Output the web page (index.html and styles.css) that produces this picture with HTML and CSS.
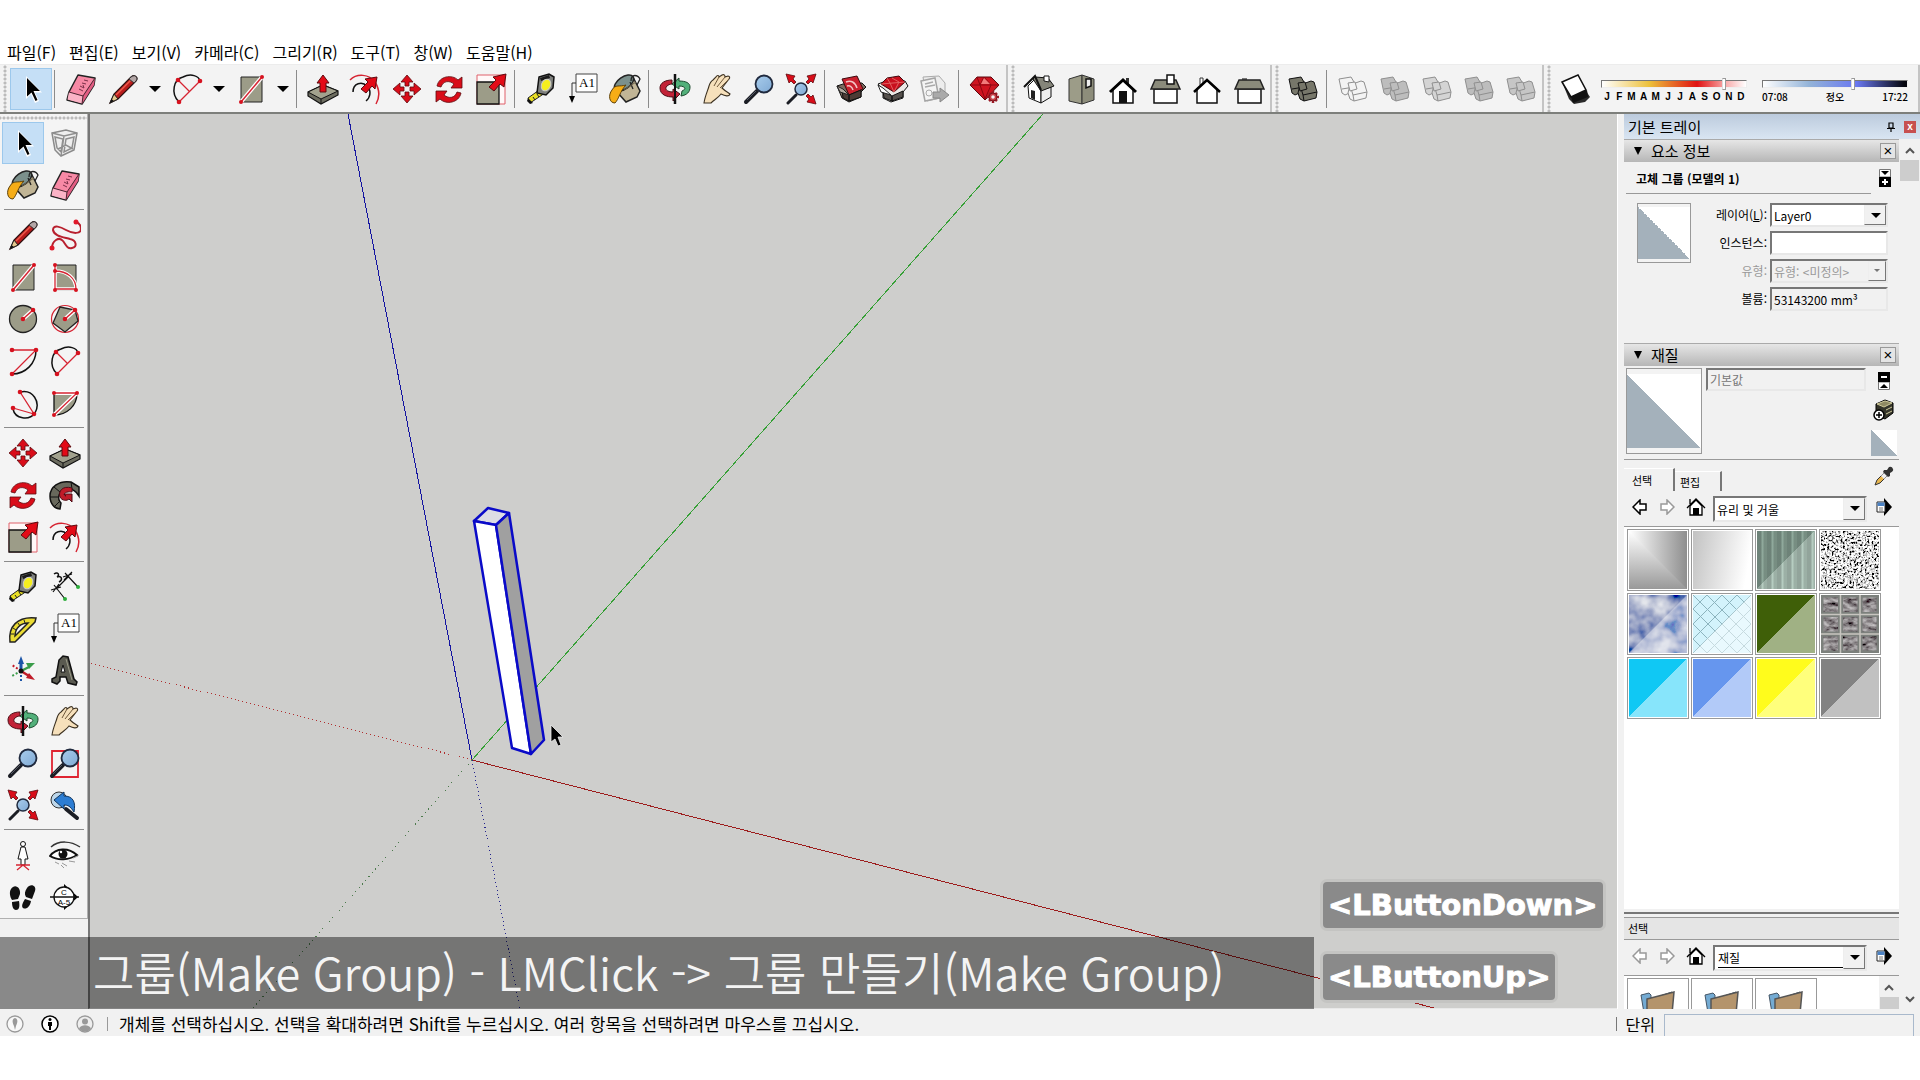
FILE: index.html
```
<!DOCTYPE html>
<html lang="ko">

<head>
    <meta charset="UTF-8">
    <meta name="viewport" content="width=device-width, initial-scale=1.0">
    <title>SketchUp</title>
    <link rel="stylesheet" href="styles.css">
</head>

<body>

    <!-- icons -->
    <svg class="defs" aria-hidden="true">
        <defs>
            <linearGradient id="lens" x1="0" y1="0" x2="1" y2="1">
                <stop offset="0" stop-color="#a9cdec" />
                <stop offset="1" stop-color="#7fa9d4" />
            </linearGradient>
            <linearGradient id="fade-x">
                <stop offset="0" stop-color="#fff" />
                <stop offset="1" stop-color="#8e8e8e" />
            </linearGradient>
            <linearGradient id="fade-y" x1="0" y1="0" x2="0" y2="1">
                <stop offset="0" stop-color="#fff" />
                <stop offset="1" stop-color="#999" />
            </linearGradient>
            <filter id="speckle" x="0" y="0" width="100%" height="100%">
                <feTurbulence type="fractalNoise" baseFrequency="0.45" numOctaves="2" seed="4" />
                <feColorMatrix values="4 0 0 0 -1.3  4 0 0 0 -1.3  4 0 0 0 -1.3  0 0 0 0 1" />
            </filter>
            <filter id="clouds" x="0" y="0" width="100%" height="100%">
                <feTurbulence type="fractalNoise" baseFrequency="0.05" numOctaves="3" seed="8" />
                <feColorMatrix values="1.5 0 0 0 -0.45  1.4 0 0 0 -0.35  0.9 0 0 0 0.1  0 0 0 0 1" />
            </filter>
            <filter id="stone" x="0" y="0" width="100%" height="100%">
                <feTurbulence type="fractalNoise" baseFrequency="0.12 0.25" numOctaves="3" seed="2" />
                <feColorMatrix values="0.9 0 0 0 -0.18  0.9 0 0 0 -0.2  0.9 0 0 0 -0.19  0 0 0 0 1" />
            </filter>
        </defs>

        <symbol id="i-arrow" viewBox="0 0 32 32">
            <path d="M11 3V26L16 21L20 30L24 28L20 19.500H27Z" fill="#fff" />
            <path d="M12 5V23.500L16.500 19.500L20.500 28L22.500 27L18.500 18H25Z" fill="#000" />
        </symbol>
        <symbol id="i-eraser" viewBox="0 0 32 32">
            <path d="M13 2L30 5L29 12L17 31L2 27L4 19Z" fill="#f789a5" stroke="#222" stroke-width="1.500" stroke-linejoin="round" />
            <path d="M4 19L18 23L17 30.500L2.500 26.500Z" fill="#fbb3c6" />
            <path d="M18 23L30 5L29 12L17 31Z" fill="#e25d83" />
            <path d="M4 19L18 23L30 5M18 23L17 31" fill="none" stroke="#4a2430" />
            <path d="M14 16l4 2M15 13l4 2-1-3M17 10l4 1M19 7l4 1" stroke="#7c3049" fill="none" />
        </symbol>
        <symbol id="i-pencil" viewBox="0 0 32 32">
            <path d="M3 30L7 21L24 4Q28 1 30 5Q30 7 29 8L11 26Z" fill="#b91c1c" stroke="#2d1010" stroke-width="1.200" />
            <path d="M3 30L7 21L11 26Z" fill="#e5c98e" stroke="#222" />
            <path d="M3 30L4.500 26L7 28Z" fill="#111" />
            <path d="M9 22L25 6" stroke="#ee5a4b" stroke-width="1.500" />
            <path d="M22 6L24 4Q28 1 30 5Q30 7 29 8L27 10Z" fill="#b3a6a6" stroke="#333" />
        </symbol>
        <symbol id="i-arc" viewBox="0 0 32 32">
            <path d="M8 29C-1 20 3 6 12 4C20 0 28 3 29 8" fill="none" stroke="#111" stroke-width="1.500" />
            <path d="M8 29L29 8M7 7L18 18" stroke="#d62432" stroke-width="1.300" />
            <g fill="#d6121f"><circle cx="7" cy="7" r="2.300" /><circle cx="29" cy="8" r="2.300" /><circle cx="8" cy="29" r="2.300" /></g>
        </symbol>
        <symbol id="i-rect" viewBox="0 0 32 32">
            <path d="M6 4H27V29H6Z" fill="#9c9c88" stroke="#222" />
            <path d="M6 29L27 4" stroke="#fff" stroke-width="4" /><path d="M6 29L27 4" stroke="#d62432" stroke-width="1.500" />
            <circle cx="6" cy="29" r="2" fill="#d6121f" /><circle cx="27" cy="4" r="2" fill="#d6121f" />
        </symbol>
        <symbol id="i-push" viewBox="0 0 32 32">
            <path d="M1 19L16 12L31 18V22L14 31L1 23Z" fill="#6d6d60" stroke="#111" stroke-width="1.200" />
            <path d="M1 19L16 12L31 18L14 26Z" fill="#a2a28e" stroke="#111" /><path d="M14 26V31" stroke="#111" />
            <path d="M13 19V10H10L16 2L22 10H19V19Z" fill="#e30b17" stroke="#5d0a0e" />
        </symbol>
        <symbol id="i-offset" viewBox="0 0 32 32">
            <path d="M1 7C8 0 20 1 26 9C31 17 31 24 27 31" fill="none" stroke="#d62432" stroke-width="1.500" />
            <path d="M4 19C4 10 13 8 18 13C23 18 21 25 17 28" fill="none" stroke="#111" stroke-width="1.500" />
            <path d="M12 16L19 9L16 6L28 4L26 16L23 13L17 20Z" fill="#e30b17" stroke="#5d0a0e" />
        </symbol>
        <symbol id="i-move" viewBox="0 0 32 32">
            <path id="mv" d="M16 2L22 9H18V13H14V9H10Z" fill="#d90d19" stroke="#5d0a0e" stroke-width=".8" />
            <use href="#mv" transform="rotate(90 16 16)" /><use href="#mv" transform="rotate(180 16 16)" /><use href="#mv" transform="rotate(270 16 16)" />
        </symbol>
        <symbol id="i-rotate" viewBox="0 0 32 32">
            <path id="rt" d="M4 13C6 3 19 1 25 7L29 4V15H18L21 11C16 7 10 8 8 14Z" fill="#d90d19" stroke="#5d0a0e" stroke-width=".8" />
            <use href="#rt" transform="rotate(180 16 16.500)" />
        </symbol>
        <symbol id="i-scale" viewBox="0 0 32 32">
            <path d="M2 2H30V31H2Z" fill="#fff8f8" stroke="#e0606a" /><path d="M2 9H24V31H2Z" fill="#9c9c88" stroke="#111" stroke-width="1.300" />
            <path d="M14 14L21 7L18 4L31 1L29 14L25 11L19 18Z" fill="#e30b17" stroke="#5d0a0e" />
        </symbol>
        <symbol id="i-tape" viewBox="0 0 32 32">
            <path d="M3 25L17 15L20 20L5 30Z" fill="#e9df25" stroke="#222" /><path d="M3 25L8 30L5 31L2 28Z" fill="#111" />
            <path d="M14 4L24 1L29 4L28 15L21 22L12 20Z" fill="#7d7f7c" stroke="#111" stroke-width="1.500" />
            <path d="M15 5L24 2L25 5L16 8Z" fill="#1b1b1b" /><ellipse cx="21" cy="12" rx="4.500" ry="6" fill="#f5ee1f" stroke="#ccc" transform="rotate(25 21 12)" />
            <path d="M8 24l2 3M12 21l2 3" stroke="#222" />
        </symbol>
        <symbol id="i-paint" viewBox="0 0 32 32">
            <path d="M12 12L24 4L31 18L28 24L17 29L9 20Z" fill="#c1b596" stroke="#222" stroke-width="1.500" />
            <ellipse cx="15" cy="10" rx="11" ry="6" fill="#7b908c" stroke="#222" stroke-width="1.500" transform="rotate(-35 15 10)" />
            <path d="M22 8C22 0 29 2 31 6L28 12M21 9L24 16" fill="none" stroke="#222" stroke-width="1.300" />
            <path d="M15 17L27 9" stroke="#6d634b" />
            <path d="M3 17C6 11 11 14 17 12C11 18 10 26 6 30C0 30 -1 22 3 17Z" fill="#f6ad17" stroke="#5e420b" />
        </symbol>
        <symbol id="i-orbit" viewBox="0 0 32 32">
            <path d="M20 8V5L13 11L20 16V13C26 13 28 16 23 18L22 23C28 22 31 19 31 14C31 10 27 8 20 8Z" fill="#52b07a" stroke="#1c4a2e" />
            <path d="M13 7C6 7 1 10 1 15C1 22 8 24 14 24V28L21 21L14 16V19C8 19 5 16 8 13C9 12 11 11 13 11Z" fill="#c22237" stroke="#4e0d16" />
            <path d="M16 1V9M16 23V31" stroke="#111" stroke-width="2.500" /><path d="M16 9V23" stroke="#111" stroke-width="2" />
        </symbol>
        <symbol id="i-hand" viewBox="0 0 32 32">
            <path d="M3 30C4 23 7 17 8 13C9 10 10 8 12 7L15 4C16 2 18 2 18 4L21 2C23 1 24 2 24 4L27 3C29 3 29 5 28 6L21 15C24 18 28 20 29 21C28 24 24 23 20 21C17 25 13 27 10 30Z" fill="#f6e0bb" stroke="#3b3020" stroke-width="1.100" />
            <path d="M13 13L18 4M16 14L24 4M19 15L28 6" stroke="#6d573a" fill="none" />
        </symbol>
        <symbol id="i-zoom" viewBox="0 0 32 32">
            <path d="M3 29L14 18" stroke="#1b1d24" stroke-width="4" stroke-linecap="round" /><path d="M4 27L13 18" stroke="#555a66" />
            <circle cx="21" cy="11" r="8.500" fill="url(#lens)" stroke="#202a3e" stroke-width="1.800" />
        </symbol>
        <symbol id="i-extents" viewBox="0 0 32 32">
            <path d="M3 30L11 22" stroke="#1b1d24" stroke-width="3" stroke-linecap="round" />
            <circle cx="16" cy="16" r="6" fill="url(#lens)" stroke="#202a3e" stroke-width="1.500" />
            <g fill="#d90d19" stroke="#5d0a0e" stroke-width=".8"><path id="ex" d="M1 1L10 3L8 6L11 9L9 11L6 8L4 10Z" /><use href="#ex" transform="matrix(-1 0 0 1 32 0)" /><use href="#ex" transform="rotate(180 16 16)" /></g>
        </symbol>
        <symbol id="i-box" viewBox="0 0 32 32">
            <path d="M2 13L8 11L27 10L31 14L26 19V24L14 29L7 25Z" fill="#7d6a5e" stroke="#111" />
            <path d="M7 6L22 3L28 16L14 22Z" fill="#c9202d" stroke="#3e0a0e" /><path d="M11 9C16 7 20 9 22 15M12 13C15 12 17 14 18 17" fill="none" stroke="#f3c4c4" stroke-width="1.500" />
            <path d="M7 16L14 22V28L8 25ZM14 22L26 17V24L14 28Z" fill="#4c3b35" stroke="#111" /><path d="M2 13L8 16L14 22L5 19Z" fill="#b1a79e" stroke="#222" />
        </symbol>
        <symbol id="i-gembox" viewBox="0 0 32 32">
            <path d="M1 11L9 8L28 8L31 13L26 19V25L14 29L6 25V18Z" fill="#ece9e6" stroke="#111" />
            <path d="M10 5L22 3L28 9L17 19L4 11Z" fill="#c9101d" stroke="#3e0a0e" /><path d="M4 11L28 9M10 5L13 10L17 19L22 9L15 5" fill="none" stroke="#e06060" />
            <path d="M6 18L15 23V28L7 25ZM15 23L26 18V24L15 28Z" fill="#55504c" stroke="#111" /><path d="M1 12L6 15L14 22L4 19Z" fill="#fff" stroke="#222" />
        </symbol>
        <symbol id="i-send" viewBox="0 0 32 32">
            <path d="M4 4L20 3L26 10V24L8 28Z" fill="#ededed" stroke="#aaa" /><path d="M2 8L16 5L20 25L6 28Z" fill="#f4f4f4" stroke="#a5a5a5" stroke-width="1.500" />
            <path d="M6 11L14 9M6 14L16 12" stroke="#aaa" stroke-width="1.500" /><circle cx="10" cy="20" r="3" fill="none" stroke="#aaa" />
            <path d="M14 19H21V15L30 22L21 29V25H14Z" fill="#a9a9a9" stroke="#888" />
        </symbol>
        <symbol id="i-gem" viewBox="0 0 32 32">
            <path d="M8 4H22L30 12L16 27L1 12Z" fill="#cf1420" stroke="#5c070d" /><path d="M1 12H30M8 4L11 12L16 26L22 12L15 4L11 12" fill="none" stroke="#8d0710" /><path d="M15 5L21 11H12Z" fill="#f17a7a" />
            <path d="M24 18v12M18 24h12M20 20l8 8M28 20l-8 8" stroke="#9c1b26" stroke-width="2.500" /><circle cx="24" cy="24" r="4" fill="#c63e47" stroke="#7e121b" /><circle cx="24" cy="24" r="1.800" fill="#f2f2f2" />
        </symbol>
        <symbol id="i-iso" viewBox="0 0 32 32">
            <path d="M5 13L12 6L18 16V30L6 25Z" fill="#fff" stroke="#111" /><path d="M18 17L28 14V24L18 30Z" fill="#eee" stroke="#111" />
            <path d="M12 4L25 5L31 13L18 18L10 6Z" fill="#85857a" stroke="#111" /><path d="M1 14L12 3L18 17" fill="none" stroke="#111" stroke-width="2" /><path d="M21 3H26V9L21 8Z" fill="#fff" stroke="#111" /><path d="M8 17L12 18V27L8 25Z" fill="#222" />
        </symbol>
        <symbol id="i-top" viewBox="0 0 32 32">
            <path d="M4 6L17 2V31L4 28Z" fill="#9c9c88" stroke="#333" /><path d="M17 2L29 6V27L17 31Z" fill="#8d8d7b" stroke="#333" /><path d="M21 6H26V13L21 15Z" fill="#eee" stroke="#111" stroke-width="1.500" />
        </symbol>
        <symbol id="i-front" viewBox="0 0 32 32">
            <path d="M19 5H22V11H19Z" fill="#333" /><path d="M6 16L16 7L26 16V30H6Z" fill="#fff" stroke="#111" stroke-width="1.500" /><path d="M3 19L16 7L29 19" fill="none" stroke="#000" stroke-width="3" /><path d="M12 18H20V30H12Z" fill="#111" />
        </symbol>
        <symbol id="i-right" viewBox="0 0 32 32">
            <path d="M5 16H28V30H5Z" fill="#fff" stroke="#111" stroke-width="1.500" /><path d="M6 7H27L31 16H2Z" fill="#8b8b7b" stroke="#222" stroke-width="1.500" /><path d="M18 2H25V11H18Z" fill="#fff" stroke="#111" stroke-width="1.500" />
        </symbol>
        <symbol id="i-back" viewBox="0 0 32 32">
            <path d="M9 5H12V12H9Z" fill="#fff" stroke="#333" /><path d="M6 16L16 7L26 16V30H6Z" fill="#fff" stroke="#111" stroke-width="1.500" /><path d="M3 19L16 7L29 19" fill="none" stroke="#000" stroke-width="2.500" />
        </symbol>
        <symbol id="i-left" viewBox="0 0 32 32">
            <path d="M5 16H28V30H5Z" fill="#fff" stroke="#111" stroke-width="1.500" /><path d="M9 5H14V8H9Z" fill="#777" /><path d="M6 7H27L31 16H2Z" fill="#8b8b7b" stroke="#222" stroke-width="1.500" />
        </symbol>
        <symbol id="i-solid" viewBox="0 0 32 32">
            <path d="M2 6L14 4L17 9L19 17L8 22L5 20Z" /><path d="M5 16L17 14" />
            <path d="M13 12L24 8L27 9L30 19L29 25L17 28L13 26L11 20Z" /><path d="M13 12L16 22L30 19M16 22L17 28" />
            <path d="M11 10L18 9L20 16L13 18Z" />
        </symbol>
        <symbol id="i-shadow" viewBox="0 0 32 32">
            <path d="M3 9L19 3L29 21L31 24L26 29L15 31L10 26Z" fill="#2a2a2a" /><path d="M3 9L19 2L27 17L12 24Z" fill="#fff" stroke="#111" stroke-width="1.500" /><path d="M12 24L28 17L29 24L14 30Z" fill="#111" />
        </symbol>
        <symbol id="i-component" viewBox="0 0 32 32">
            <path d="M3 6L17 3L28 6L25 23L12 29L6 23Z" fill="#eee" stroke="#8a8a8a" stroke-width="1.500" /><path d="M3 6L15 9L28 6M15 9L12 29M6 10L14 12L12 25L8 21ZM17 12L25 10L23 21L15 25ZM9 22L17 18L24 22" fill="none" stroke="#8f8f8f" stroke-width="1.500" />
        </symbol>
        <symbol id="i-free" viewBox="0 0 32 32">
            <path d="M3 29C3 22 10 17 14 22C17 26 18 30 23 29C29 28 27 21 21 20C14 18 5 17 4 11C4 5 12 8 17 11C24 15 32 15 32 10C32 6 30 4 27 3" fill="none" stroke="#b8202e" stroke-width="2" /><circle cx="3" cy="29" r="2.500" fill="#e0192a" /><circle cx="27" cy="3" r="2.500" fill="#e0192a" />
        </symbol>
        <symbol id="i-rotrect" viewBox="0 0 32 32">
            <path d="M6 4H27V29H6Z" fill="#9c9c88" stroke="#222" /><path d="M6 10C18 10 27 17 27 28H6V4" fill="none" stroke="#fff" stroke-width="3.500" /><path d="M6 10C18 10 27 17 27 28H6V4" fill="none" stroke="#d62432" stroke-width="1.300" />
            <g fill="#d6121f"><circle cx="6" cy="4" r="2" /><circle cx="6" cy="10" r="2" /><circle cx="6" cy="29" r="2" /><circle cx="27" cy="29" r="2" /></g>
        </symbol>
        <symbol id="i-circle" viewBox="0 0 32 32">
            <circle cx="16" cy="16" r="13.500" fill="#9c9c88" stroke="#222" stroke-width="1.300" /><path d="M16 16L26 7" stroke="#fff" stroke-width="4" /><path d="M16 16L26 7" stroke="#d62432" stroke-width="1.500" /><circle cx="16" cy="16" r="2.300" fill="#d6121f" /><circle cx="26" cy="7" r="2.300" fill="#d6121f" />
        </symbol>
        <symbol id="i-polygon" viewBox="0 0 32 32">
            <circle cx="16" cy="16" r="13.500" fill="none" stroke="#d62432" stroke-width="1.200" /><path d="M11 4L26 7L29 18L16 29L4 20Z" fill="#9c9c88" stroke="#222" stroke-width="1.300" /><path d="M16 16L26 7" stroke="#fff" stroke-width="4" /><path d="M16 16L26 7" stroke="#d62432" stroke-width="1.500" /><circle cx="16" cy="16" r="2.300" fill="#d6121f" /><circle cx="26" cy="7" r="2.300" fill="#d6121f" />
        </symbol>
        <symbol id="i-arc2" viewBox="0 0 32 32">
            <path d="M29 5C29 18 19 29 5 29" fill="none" stroke="#111" stroke-width="1.500" /><path d="M5 5H29L5 29" fill="none" stroke="#d62432" stroke-width="1.300" /><g fill="#d6121f"><circle cx="5" cy="5" r="2.300" /><circle cx="29" cy="5" r="2.300" /><circle cx="5" cy="29" r="2.300" /></g>
        </symbol>
        <symbol id="i-arc3" viewBox="0 0 32 32">
            <path d="M13 5C26 2 34 15 28 26C22 34 8 32 6 22" fill="none" stroke="#111" stroke-width="1.500" /><path d="M13 5L27 27L6 21" fill="none" stroke="#d62432" stroke-width="1.300" /><g fill="#d6121f"><circle cx="13" cy="5" r="2.300" /><circle cx="27" cy="27" r="2.300" /><circle cx="6" cy="21" r="2.300" /></g>
        </symbol>
        <symbol id="i-pie" viewBox="0 0 32 32">
            <path d="M5 6H28C28 19 18 28 5 28Z" fill="#9c9c88" stroke="#111" stroke-width="1.300" /><path d="M5 28L28 6H5" fill="none" stroke="#fff" stroke-width="4" /><path d="M5 28L28 6H5" fill="none" stroke="#d62432" stroke-width="1.300" /><g fill="#d6121f"><circle cx="5" cy="6" r="2" /><circle cx="28" cy="6" r="2" /><circle cx="5" cy="28" r="2" /></g>
        </symbol>
        <symbol id="i-follow" viewBox="0 0 32 32">
            <path d="M30 8L22 3C10 1 1 8 1 17C1 25 6 30 11 30L12 24C8 20 9 12 17 10C23 9 27 12 30 17Z" fill="#68685c" stroke="#111" stroke-width="1.500" /><path d="M22 3L23 10M5 8L11 13M1 18L9 18M6 27L10 23" stroke="#111" />
            <path d="M23 9C13 6 9 13 11 18C13 22 18 22 20 20L23 23L23 15L15 15L17 17C14 17 14 12 23 13Z" fill="#c01c29" stroke="#4e0d16" />
        </symbol>
        <symbol id="i-dim" viewBox="0 0 32 32">
            <path d="M7 18L20 5M5 14L16 28M16 2L29 16M2 19L12 16M4 21L10 13M14 6L23 3M15 9L23 1" stroke="#111" stroke-width="1.200" /><path d="M5 3C9 0 11 4 8 6C13 4 14 9 10 11" fill="none" stroke="#111" stroke-width="1.500" /><circle cx="16" cy="28" r="2" fill="#2eae3c" /><circle cx="29" cy="16" r="2" fill="#2eae3c" />
        </symbol>
        <symbol id="i-protractor" viewBox="0 0 32 32">
            <path d="M3 29C1 14 10 3 29 5L28 9L8 29ZM8 23C8 15 14 10 21 10Z" fill="#eadb33" fill-rule="evenodd" stroke="#222" stroke-width="1.500" /><path d="M4 21l3 0M6 15l3 2M11 10l2 3M17 7l1 3" stroke="#222" />
        </symbol>
        <symbol id="i-axes" viewBox="0 0 32 32">
            <path d="M14 16V9" stroke="#1c55a8" stroke-width="3" /><path d="M11 9L14 1L17 9Z" fill="#1c55a8" /><path d="M14 16L22 12" stroke="#3a9c4a" stroke-width="2.500" /><path d="M19 8L28 8L22 14Z" fill="#3a9c4a" /><path d="M14 16L22 21" stroke="#c01c29" stroke-width="2.500" /><path d="M19 23L22 18L28 25Z" fill="#c01c29" />
            <path d="M14 16V28" stroke="#1c55a8" stroke-width="2" stroke-dasharray="2 2" /><path d="M14 16L5 21" stroke="#3a9c4a" stroke-width="2" stroke-dasharray="2 2" /><path d="M14 16L5 10" stroke="#c01c29" stroke-width="2" stroke-dasharray="2 2" /><circle cx="14" cy="16" r="2.500" fill="#111" />
        </symbol>
        <symbol id="i-3dtext" viewBox="0 0 32 32">
            <path d="M3 24L7 22L10 5L14 1L19 2L25 24L28 27L27 30L19 28L17 22H11L11 26L8 29L3 27Z" fill="#5a5a50" stroke="#111" stroke-width="1.500" /><path d="M12 17L14 10L16 17Z" fill="#f3f3f3" stroke="#111" /><path d="M17 4L23 25" stroke="#9a9a88" />
        </symbol>
        <symbol id="i-window" viewBox="0 0 32 32">
            <path d="M3 4H29V30H3Z" fill="none" stroke="#df2431" stroke-width="1.800" /><use href="#i-zoom" width="32" height="32" />
        </symbol>
        <symbol id="i-prev" viewBox="0 0 32 32">
            <circle cx="10" cy="11" r="8" fill="#bcd6ea" stroke="#333" /><path d="M17 20L28 29" stroke="#1b1d24" stroke-width="4" stroke-linecap="round" /><path d="M5 11L15 3V7C24 7 27 13 25 23C21 17 19 16 15 16V20Z" fill="#2d7dd2" stroke="#12365e" />
        </symbol>
        <symbol id="i-person" viewBox="0 0 32 32">
            <circle cx="16" cy="5" r="2.500" fill="#fff" stroke="#111" /><path d="M14 8H18L21 20L18 20V26H14V20L11 20Z" fill="#fff" stroke="#111" /><path d="M10 31L16 26L22 31M9 26H23" fill="none" stroke="#d62432" stroke-width="1.300" />
        </symbol>
        <symbol id="i-eye" viewBox="0 0 32 32">
            <path d="M2 8C10 1 22 2 31 8" fill="none" stroke="#333" stroke-width="1.500" /><path d="M1 17C7 9 19 8 28 16C20 21 9 22 1 17Z" fill="#fff" stroke="#111" stroke-width="2" /><circle cx="14" cy="15" r="4.500" fill="#111" /><circle cx="12" cy="13" r="1.200" fill="#fff" /><path d="M6 23l4 2M13 24l5 3M20 22l6 1M24 19l5-2M12 26l3 3" stroke="#999" />
        </symbol>
        <symbol id="i-walk" viewBox="0 0 32 32">
            <path d="M4 8C8 2 14 7 13 13L11 18L5 19C3 16 2 11 4 8ZM5 21L12 20C13 26 12 29 9 29C6 29 5 25 5 21ZM20 7C23 2 30 4 28 10L25 18L19 16C17 13 18 10 20 7ZM18 18L24 20C23 26 19 29 16 27C14 25 16 21 18 18Z" fill="#111" />
        </symbol>
        <symbol id="i-home" viewBox="0 0 20 20">
            <path d="M4 9V18H16V9L10 3Z" fill="#fff" stroke="#000" stroke-width="1.300" /><path d="M1 11L10 2L19 11M4 2V7" fill="none" stroke="#000" stroke-width="1.300" /><path d="M7 11H13V18H7Z" />
        </symbol>
        <symbol id="i-nav" viewBox="0 0 16 16"><path d="M1 8L8 1V5H14V11H8V15Z" fill="#fff" stroke="currentColor" stroke-width="1.500" /></symbol>
        <symbol id="i-detail" viewBox="0 0 16 18"><path d="M8 0L16 9L8 18Z" /><path d="M1 4H9V14H1Z" fill="#fff" stroke="#222" /><path d="M1.500 4.500H8.500V8H1.500Z" fill="#4b82c4" /><path d="M3 10H7M3 12H7" stroke="#777" /></symbol>
        <symbol id="i-folder" viewBox="0 0 38 34">
            <path d="M2 4L10 2L12 4V8L33 1L29 34H7Z" fill="#74abd3" stroke="#456" /><path d="M8 8L35 1L32 34H8Z" fill="#b4946c" stroke="#555" stroke-width="1.500" />
        </symbol>
    </svg>

    <nav class="menu">
        <a href="#">파일(F)</a>
        <a href="#">편집(E)</a>
        <a href="#">보기(V)</a>
        <a href="#">카메라(C)</a>
        <a href="#">그리기(R)</a>
        <a href="#">도구(T)</a>
        <a href="#">창(W)</a>
        <a href="#">도움말(H)</a>
    </nav>

    <header class="toolbars">
        <div class="toolbar">
            <button class="tool active" aria-label="선택"><svg><use href="#i-arrow" /></svg></button>
            <i class="sep"></i>
            <button class="tool" aria-label="지우개"><svg><use href="#i-eraser" /></svg></button>
            <button class="tool" aria-label="선"><svg><use href="#i-pencil" /></svg></button>
            <button class="drop" aria-label="선 도구"></button>
            <button class="tool" aria-label="호"><svg><use href="#i-arc" /></svg></button>
            <button class="drop" aria-label="호 도구"></button>
            <button class="tool" aria-label="직사각형"><svg><use href="#i-rect" /></svg></button>
            <button class="drop" aria-label="도형 도구"></button>
            <i class="sep"></i>
            <button class="tool" aria-label="밀기/끌기"><svg><use href="#i-push" /></svg></button>
            <button class="tool" aria-label="오프셋"><svg><use href="#i-offset" /></svg></button>
            <button class="tool" aria-label="이동"><svg><use href="#i-move" /></svg></button>
            <button class="tool" aria-label="회전"><svg><use href="#i-rotate" /></svg></button>
            <button class="tool" aria-label="배율"><svg><use href="#i-scale" /></svg></button>
            <i class="sep"></i>
            <button class="tool" aria-label="줄자"><svg><use href="#i-tape" /></svg></button>
            <button class="tool" aria-label="텍스트"><svg viewBox="0 0 32 32"><path d="M9 1H30V19H9Z" fill="#fff" stroke="#444" /><path d="M9 10H5V24" fill="none" stroke="#333" /><path d="M2 23H8L5 30Z" /><text x="20" y="14" class="glyph-serif">A1</text></svg></button>
            <button class="tool" aria-label="페인트"><svg><use href="#i-paint" /></svg></button>
            <i class="sep"></i>
            <button class="tool" aria-label="궤도"><svg><use href="#i-orbit" /></svg></button>
            <button class="tool" aria-label="이동 보기"><svg><use href="#i-hand" /></svg></button>
            <button class="tool" aria-label="확대/축소"><svg><use href="#i-zoom" /></svg></button>
            <button class="tool" aria-label="범위 확대"><svg><use href="#i-extents" /></svg></button>
            <i class="sep"></i>
            <button class="tool" aria-label="3D Warehouse"><svg><use href="#i-box" /></svg></button>
            <button class="tool" aria-label="Extension Warehouse"><svg><use href="#i-gembox" /></svg></button>
            <button class="tool" aria-label="LayOut으로 보내기"><svg><use href="#i-send" /></svg></button>
            <i class="sep"></i>
            <button class="tool" aria-label="확장 프로그램 관리자"><svg><use href="#i-gem" /></svg></button>
        </div>
        <div class="toolbar">
            <button class="tool" aria-label="등각"><svg><use href="#i-iso" /></svg></button>
            <button class="tool" aria-label="상단"><svg><use href="#i-top" /></svg></button>
            <button class="tool" aria-label="전면"><svg><use href="#i-front" /></svg></button>
            <button class="tool" aria-label="오른쪽"><svg><use href="#i-right" /></svg></button>
            <button class="tool" aria-label="후면"><svg><use href="#i-back" /></svg></button>
            <button class="tool" aria-label="왼쪽"><svg><use href="#i-left" /></svg></button>
        </div>
        <div class="toolbar">
            <button class="tool solid dark" aria-label="외부 셸"><svg><use href="#i-solid" /></svg></button>
            <i class="sep"></i>
            <button class="tool solid wire" aria-label="교차"><svg><use href="#i-solid" /></svg></button>
            <button class="tool solid" aria-label="결합"><svg><use href="#i-solid" /></svg></button>
            <button class="tool solid half" aria-label="빼기"><svg><use href="#i-solid" /></svg></button>
            <button class="tool solid" aria-label="트림"><svg><use href="#i-solid" /></svg></button>
            <button class="tool solid cut" aria-label="분할"><svg><use href="#i-solid" /></svg></button>
        </div>
        <div class="toolbar shadows">
            <button class="tool" aria-label="그림자"><svg><use href="#i-shadow" /></svg></button>
            <div class="slider">
                <input type="range" class="months" aria-label="날짜" min="0" max="100" value="86">
                <div class="ticks"><b>J</b><b>F</b><b>M</b><b>A</b><b>M</b><b>J</b><b>J</b><b>A</b><b>S</b><b>O</b><b>N</b><b>D</b></div>
            </div>
            <div class="slider">
                <input type="range" class="hours" aria-label="시간" min="0" max="100" value="63">
                <div class="ticks times"><span>07:08</span><span>정오</span><span>17:22</span></div>
            </div>
        </div>
    </header>

    <main>
        <aside class="palette">
            <div class="group">
                <button class="tool active" aria-label="선택"><svg><use href="#i-arrow" /></svg></button>
                <button class="tool" aria-label="구성요소 만들기"><svg><use href="#i-component" /></svg></button>
                <button class="tool" aria-label="페인트"><svg><use href="#i-paint" /></svg></button>
                <button class="tool" aria-label="지우개"><svg><use href="#i-eraser" /></svg></button>
            </div>
            <div class="group">
                <button class="tool" aria-label="선"><svg><use href="#i-pencil" /></svg></button>
                <button class="tool" aria-label="자유선"><svg><use href="#i-free" /></svg></button>
                <button class="tool" aria-label="직사각형"><svg><use href="#i-rect" /></svg></button>
                <button class="tool" aria-label="회전된 직사각형"><svg><use href="#i-rotrect" /></svg></button>
                <button class="tool" aria-label="원"><svg><use href="#i-circle" /></svg></button>
                <button class="tool" aria-label="다각형"><svg><use href="#i-polygon" /></svg></button>
                <button class="tool" aria-label="호"><svg><use href="#i-arc2" /></svg></button>
                <button class="tool" aria-label="2점 호"><svg><use href="#i-arc" /></svg></button>
                <button class="tool" aria-label="3점 호"><svg><use href="#i-arc3" /></svg></button>
                <button class="tool" aria-label="파이"><svg><use href="#i-pie" /></svg></button>
            </div>
            <div class="group">
                <button class="tool" aria-label="이동"><svg><use href="#i-move" /></svg></button>
                <button class="tool" aria-label="밀기/끌기"><svg><use href="#i-push" /></svg></button>
                <button class="tool" aria-label="회전"><svg><use href="#i-rotate" /></svg></button>
                <button class="tool" aria-label="따라가기"><svg><use href="#i-follow" /></svg></button>
                <button class="tool" aria-label="배율"><svg><use href="#i-scale" /></svg></button>
                <button class="tool" aria-label="오프셋"><svg><use href="#i-offset" /></svg></button>
            </div>
            <div class="group">
                <button class="tool" aria-label="줄자"><svg><use href="#i-tape" /></svg></button>
                <button class="tool" aria-label="치수"><svg><use href="#i-dim" /></svg></button>
                <button class="tool" aria-label="각도기"><svg><use href="#i-protractor" /></svg></button>
                <button class="tool" aria-label="텍스트"><svg viewBox="0 0 32 32"><path d="M9 1H30V19H9Z" fill="#fff" stroke="#444" /><path d="M9 10H5V24" fill="none" stroke="#333" /><path d="M2 23H8L5 30Z" /><text x="20" y="14" class="glyph-serif">A1</text></svg></button>
                <button class="tool" aria-label="축"><svg><use href="#i-axes" /></svg></button>
                <button class="tool" aria-label="3D 텍스트"><svg><use href="#i-3dtext" /></svg></button>
            </div>
            <div class="group">
                <button class="tool" aria-label="궤도"><svg><use href="#i-orbit" /></svg></button>
                <button class="tool" aria-label="이동 보기"><svg><use href="#i-hand" /></svg></button>
                <button class="tool" aria-label="확대/축소"><svg><use href="#i-zoom" /></svg></button>
                <button class="tool" aria-label="창 확대"><svg><use href="#i-window" /></svg></button>
                <button class="tool" aria-label="범위 확대"><svg><use href="#i-extents" /></svg></button>
                <button class="tool" aria-label="이전"><svg><use href="#i-prev" /></svg></button>
            </div>
            <div class="group">
                <button class="tool" aria-label="카메라 배치"><svg><use href="#i-person" /></svg></button>
                <button class="tool" aria-label="둘러보기"><svg><use href="#i-eye" /></svg></button>
                <button class="tool" aria-label="걷기"><svg><use href="#i-walk" /></svg></button>
                <button class="tool" aria-label="단면"><svg viewBox="0 0 32 32"><path d="M15 3L29 16L15 29Z" /><circle cx="15" cy="16" r="10" fill="#fff" stroke="#111" stroke-width="1.300" /><path d="M1 16H30" stroke="#111" stroke-width="1.500" /><text x="15" y="14" class="glyph-sans">C</text><text x="15" y="24" class="glyph-sans">A-5</text></svg></button>
            </div>
        </aside>

        <section class="viewport">
            <svg class="scene" viewBox="0 0 1527 895" preserveAspectRatio="xMinYMin slice">
                <!-- axes -->
                <g fill="none" shape-rendering="crispEdges">
                    <path d="M382 646L258 0" stroke="#1414a0" />
                    <path d="M382 646L953 0" stroke="#35a035" />
                    <path d="M382 646L1348 895" stroke="#9c1c1c" />
                    <path d="M382 646L0 549" stroke="#b03030" stroke-dasharray="1 3" />
                    <path d="M382 646L162 895" stroke="#4c7a4c" stroke-dasharray="1 4" />
                    <path d="M382 646L430 895" stroke="#23238c" stroke-dasharray="1 3" />
                </g>
                <!-- solid group -->
                <g stroke="#0a0ac8" stroke-width="2.500" stroke-linejoin="round">
                    <path d="M384 407L398 394L419 399L406 411Z" fill="#dcdce4" />
                    <path d="M384 407L406 411L441 640L422 634Z" fill="#fff" />
                    <path d="M406 411L419 399L454 626L441 640Z" fill="#a0a0a0" />
                </g>
                <path d="M461 611V628L465 625L468 632L471 631L468 623H473Z" fill="#000" stroke="#eee" stroke-width=".8" />
            </svg>
            <div class="keys">
                <kbd>&lt;LButtonDown&gt;</kbd>
                <kbd>&lt;LButtonUp&gt;</kbd>
            </div>
        </section>

        <aside class="tray">
            <div class="tray-title">
                <span>기본 트레이</span>
                <button class="pin" aria-label="고정"><svg viewBox="0 0 10 12"><path d="M3 2H7V7H3ZM1 7.500H9M5 8V11M7 2V7" fill="none" stroke="#000" stroke-width="1.200" /></svg></button>
                <button class="close-tray" aria-label="닫기">x</button>
            </div>
            <div class="tray-body">
                <div class="panels">
                    <h2 class="panel-title">요소 정보 <button aria-label="닫기">×</button></h2>
                    <div class="entity">
                        <div class="entity-head">
                            <strong>고체 그룹 (모델의 1)</strong>
                            <button class="expand" aria-label="자세히"><svg viewBox="0 0 12 18"><path d="M.500 .500H11.500V8H.500Z" fill="#fff" stroke="#777" /><path d="M2 2H10L6 6ZM0 8H12V18H0Z" /><path d="M6 10V16M3 13H9" stroke="#fff" stroke-width="2" /></svg></button>
                        </div>
                        <div class="entity-form">
                            <div class="preview small"></div>
                            <div class="fields">
                                <label for="layer">레이어(<u>L</u>):</label>
                                <div class="combo"><select id="layer"><option>Layer0</option></select></div>
                                <label for="instance">인스턴스:</label>
                                <input id="instance" type="text">
                                <label for="type" class="off">유형:</label>
                                <div class="combo off"><select id="type" disabled><option>유형: &lt;미정의&gt;</option></select></div>
                                <label for="volume">볼륨:</label>
                                <input id="volume" type="text" class="flat" value="53143200 mm³" readonly>
                            </div>
                        </div>
                    </div>

                    <h2 class="panel-title">재질 <button aria-label="닫기">×</button></h2>
                    <div class="material">
                        <div class="preview"></div>
                        <input type="text" class="flat name" aria-label="재질 이름" value="기본값" disabled>
                        <div class="material-tools">
                            <button aria-label="보조 창"><svg width="12" height="18" viewBox="0 0 12 18"><path d="M.500 10H11.500V17.500H.500Z" fill="#fff" stroke="#777" /><path d="M0 0H12V10H0ZM2 16H10L6 12Z" /><path d="M3 5H9" stroke="#fff" stroke-width="2" /></svg></button>
                            <button aria-label="재질 만들기"><svg width="22" height="22" viewBox="0 0 22 22"><path d="M3 5L12 1L20 4V14L12 20L3 16Z" fill="#34342a" stroke="#000" /><path d="M4 5L12 2L19 4L11 8ZM13 11L19 8M13 15L19 12" fill="#8f8a64" stroke="#cfc99a" /><circle cx="6" cy="16" r="5" fill="#fff" stroke="#000" stroke-width="1.500" /><path d="M6 13V19M3 16H9" stroke="#000" stroke-width="1.500" /></svg></button>
                            <button class="default-mat" aria-label="기본 재질"></button>
                        </div>
                    </div>
                    <div class="tabs">
                        <button class="tab current">선택</button>
                        <button class="tab">편집</button>
                        <button class="dropper" aria-label="샘플 페인트"><svg width="20" height="20" viewBox="0 0 20 20"><path d="M1 19L3 14L11 6L14 9L6 17Z" fill="#e8b64e" stroke="#333" /><path d="M7 10L11 6L14 9L10 13Z" fill="#eee" /><path d="M10 4L13 4L15 1Q18 0 19 3Q20 5 16 7L16 10L14 11L9 6Z" fill="#333" /></svg></button>
                    </div>
                    <div class="nav">
                        <button aria-label="뒤로"><svg width="16" height="16"><use href="#i-nav" /></svg></button>
                        <button class="next dim" aria-label="앞으로"><svg width="16" height="16"><use href="#i-nav" /></svg></button>
                        <button aria-label="모델 내"><svg width="20" height="20"><use href="#i-home" /></svg></button>
                        <div class="combo"><select aria-label="재질 모음"><option>유리 및 거울</option></select></div>
                        <button aria-label="세부 정보"><svg width="16" height="18"><use href="#i-detail" /></svg></button>
                    </div>
                    <div class="swatches">
                        <button class="swatch" aria-label="회색 반투명"><svg viewBox="0 0 58 58"><rect width="58" height="58" fill="url(#fade-y)" /><path d="M0 0H58V58Z" fill="url(#fade-x)" /></svg></button>
                        <button class="swatch" aria-label="거울"><span class="silver"></span></button>
                        <button class="swatch" aria-label="골판 유리"><span class="ribbed"></span></button>
                        <button class="swatch" aria-label="반점 유리"><svg><rect width="100%" height="100%" filter="url(#speckle)" /></svg></button>
                        <button class="swatch" aria-label="하늘 유리"><svg viewBox="0 0 58 58"><rect width="58" height="58" filter="url(#clouds)" /><path d="M58 0V58H0Z" fill="#fff" opacity=".4" /></svg></button>
                        <button class="swatch" aria-label="마름모 유리"><svg viewBox="0 0 58 58"><path d="M0 0H58V58H0Z" fill="#d3f3fc" /><path d="M-2 16L16 -2M-2 31L31 -2M-2 46L46 -2M-2 60L60 -2M12 60L60 12M27 60L60 27M42 60L60 42M42 -2L60 16M27 -2L60 31M12 -2L60 46M-2 -2L60 60M-2 12L46 60M-2 27L31 60M-2 42L16 60" stroke="#8cb4be" fill="none" /><path d="M58 0V58H0Z" fill="#fff" opacity=".5" /></svg></button>
                        <button class="swatch" aria-label="녹색 유리"><span class="green"></span></button>
                        <button class="swatch" aria-label="유리 블록"><svg viewBox="0 0 58 58"><rect width="58" height="58" filter="url(#stone)" /><path d="M0 0H58V58H0ZM19.500 0V58M39 0V58M0 19.500H58M0 39H58" fill="none" stroke="#7c807c" stroke-width="5" /><path d="M19.500 0V58M39 0V58M0 19.500H58M0 39H58" stroke="#c7c5bf" stroke-width="1.500" /></svg></button>
                        <button class="swatch" aria-label="하늘색 유리"><span class="cyan"></span></button>
                        <button class="swatch" aria-label="파란색 유리"><span class="blue"></span></button>
                        <button class="swatch" aria-label="노란색 유리"><span class="yellow"></span></button>
                        <button class="swatch" aria-label="회색 유리"><span class="gray"></span></button>
                    </div>
                    <div class="second">
                        <h3>선택</h3>
                        <div class="nav">
                            <button class="dim" aria-label="뒤로"><svg width="16" height="16"><use href="#i-nav" /></svg></button>
                            <button class="next dim" aria-label="앞으로"><svg width="16" height="16"><use href="#i-nav" /></svg></button>
                            <button aria-label="모델 내"><svg width="20" height="20"><use href="#i-home" /></svg></button>
                            <div class="combo line"><select aria-label="폴더"><option>재질</option></select></div>
                            <button aria-label="세부 정보"><svg width="16" height="18"><use href="#i-detail" /></svg></button>
                        </div>
                        <div class="folders">
                            <button aria-label="폴더 1"><svg><use href="#i-folder" /></svg></button>
                            <button aria-label="폴더 2"><svg><use href="#i-folder" /></svg></button>
                            <button aria-label="폴더 3"><svg><use href="#i-folder" /></svg></button>
                            <div class="scroll"><svg viewBox="0 0 10 7"><path d="M1 6L5 2L9 6" /></svg><i></i></div>
                        </div>
                    </div>
                </div>
                <div class="scroll">
                    <svg viewBox="0 0 10 7"><path d="M1 6L5 2L9 6" /></svg>
                    <i></i>
                    <svg class="down" viewBox="0 0 10 7"><path d="M1 1L5 5L9 1" /></svg>
                </div>
            </div>
        </aside>

        <p class="caption">그룹(Make Group) - LMClick -&gt; 그룹 만들기(Make Group)</p>
    </main>

    <footer class="status">
        <svg viewBox="0 0 18 18"><circle cx="9" cy="9" r="8" fill="#f8f8f8" stroke="#999" stroke-width="1.300" /><path d="M9 3C13 4 11 9 10 11L9 15L8 11C7 9 5 4 9 3Z" fill="#999" /></svg>
        <svg viewBox="0 0 18 18"><circle cx="9" cy="9" r="8" fill="#fff" stroke="#000" stroke-width="1.500" /><circle cx="9" cy="4.500" r="1.500" /><path d="M7 7H11V11H10V15H8V11H7Z" /></svg>
        <svg viewBox="0 0 18 18"><circle cx="9" cy="9" r="8" fill="#eee" stroke="#999" stroke-width="1.300" /><circle cx="9" cy="6.500" r="3" fill="#999" /><path d="M3 14C4 9 14 9 15 14Q9 19 3 14Z" fill="#999" /></svg>
        <span class="hint">개체를 선택하십시오. 선택을 확대하려면 Shift를 누르십시오. 여러 항목을 선택하려면 마우스를 끄십시오.</span>
        <label for="unit">단위</label>
        <input id="unit" type="text">
    </footer>

</body>

</html>
```
FILE: styles.css
```
* {
    box-sizing: border-box;
}

body {
    display: flex;
    flex-direction: column;
    height: 100vh;
    margin: 0;
    padding: 42px 0 44px;
    background: #fff;
    color: #000;
    font-family: "Noto Sans CJK KR", "Noto Sans", sans-serif;
    font-size: 16px;
    overflow: hidden;
}

button {
    padding: 0;
    border: none;
    background: none;
    color: inherit;
    font: inherit;
}

input, select {
    margin: 0;
    font: inherit;
    color: inherit;
    border-radius: 0;
}

.defs {
    position: absolute;
    width: 0;
    height: 0;
}

.glyph-serif {
    font: 13px "Liberation Serif", serif;
    text-anchor: middle;
}

.glyph-sans {
    font: 8px "Liberation Sans", sans-serif;
    text-anchor: middle;
}

/* menu */

.menu {
    display: flex;
    gap: 13px;
    height: 22px;
    padding-left: 7px;
    flex: none;
}

.menu a {
    color: #000;
    line-height: 20px;
    text-decoration: none;
    white-space: nowrap;
}

/* top toolbars */

.toolbars {
    display: flex;
    flex: none;
    height: 50px;
    background: #f3f3f3;
    border-top: 1px solid #ececec;
    border-bottom: 2px solid #7d7f7b;
}

.toolbar {
    display: flex;
    align-items: center;
    padding-left: 10px;
    border-right: 2px solid #c4c4c4;
    background: radial-gradient(circle, #bbb 1px, transparent 2px) 3px 4px / 4px 4px repeat-y;
}

.toolbar.shadows {
    flex: 1;
    padding-right: 10px;
}

.tool {
    display: grid;
    place-items: center;
    flex: none;
    width: 42px;
    height: 42px;
}

.tool svg {
    width: 32px;
    height: 32px;
}

.tool.active {
    background: #c5dff6;
    border: 1px solid #9cc8ec;
}

.sep {
    flex: none;
    width: 1px;
    height: 38px;
    margin: 0 5px 0 2px;
    background: #8b8b8b;
}

.drop {
    display: grid;
    place-items: center;
    width: 22px;
    height: 42px;
}

.drop::after {
    content: "";
    border: 6px solid transparent;
    border-top-color: #000;
    border-bottom: none;
}

.solid {
    fill: #bdbdbd;
    stroke: #8f8f8f;
}

.solid.dark {
    fill: #77776a;
    stroke: #111;
}

.solid.wire {
    fill: #f3f3f3;
}

.solid.half {
    fill: #d4d4d4;
}

.solid.cut {
    fill: #c6c6c6;
}

.slider {
    width: 146px;
    margin: 2px 15px 0 5px;
}

.slider + .slider {
    margin-left: 0;
    margin-right: 0;
}

.slider input {
    display: block;
    width: 100%;
    height: 14px;
    appearance: none;
    background: none;
}

.slider input::-webkit-slider-runnable-track {
    height: 8px;
    border: 1px solid;
    border-color: #777 #eee #eee #777;
}

.months::-webkit-slider-runnable-track {
    background: linear-gradient(to right, #fff, #ecc03a 33%, #e01212 66%, #f7a5a5 85%, #fff);
}

.hours::-webkit-slider-runnable-track {
    background: linear-gradient(to right, #fff, #93b3d8 32%, #6a78f0 65%, #05060e 98%);
}

.slider input::-webkit-slider-thumb {
    appearance: none;
    width: 4px;
    height: 12px;
    margin-top: -3px;
    background: #fff;
    border: 1px solid #999;
    border-left-color: #ddd;
}

.ticks {
    display: flex;
    line-height: 12px;
    font-size: 10px;
}

.ticks b {
    flex: 1;
    font-family: "Liberation Sans", sans-serif;
    text-align: center;
}

.ticks.times {
    justify-content: space-between;
    font-weight: 500;
}

/* workspace */

main {
    position: relative;
    display: flex;
    flex: 1;
    min-height: 0;
    background: #f1f1f1;
}

.palette {
    flex: none;
    align-self: flex-start;
    width: 88px;
    padding: 8px 1px 0 2px;
    background: radial-gradient(circle, #bbb 1px, transparent 2px) 2px 2px / 4px 4px repeat-x #f4f4f4;
    border-right: 1px solid #b0b0b0;
    border-bottom: 1px solid #b0b0b0;
}

.group {
    display: flex;
    flex-wrap: wrap;
}

.group + .group::before {
    content: "";
    width: 80px;
    height: 1px;
    margin: 3px 2px 4px;
    background: #8b8b8b;
}

.viewport {
    position: relative;
    flex: 1;
    min-width: 0;
    border-left: 2px solid #777;
    border-bottom: 1px solid #e8e8e8;
    background: #cececc;
}

.scene {
    display: block;
    width: 100%;
    height: 100%;
}

.keys {
    position: absolute;
    right: 15px;
    bottom: 8px;
    width: 279px;
    display: flex;
    flex-direction: column;
    align-items: flex-start;
    gap: 26px;
}

kbd {
    padding: 0 5px;
    background: #8a8a8a;
    border-radius: 4px;
    box-shadow: 0 0 0 3px #c4c4c2;
    color: #fff;
    font: bold 29px/46px "DejaVu Sans", sans-serif;
    -webkit-text-stroke: 1px #fff;
}

.caption {
    position: absolute;
    left: 0;
    bottom: 0;
    margin: 0;
    padding: 0 90px 2px 93px;
    background: rgba(0, 0, 0, .43);
    color: #f4f4f4;
    font-size: 45px;
    font-weight: 350;
    line-height: 70px;
    white-space: nowrap;
}

/* tray */

.tray {
    display: flex;
    flex-direction: column;
    flex: none;
    width: 303px;
    padding-left: 6px;
    border-left: 1px solid #fff;
    font-size: 12px;
}

.tray-title {
    display: flex;
    align-items: center;
    gap: 8px;
    height: 25px;
    flex: none;
    padding: 0 4px;
    background: linear-gradient(#bccbdd, #d9e5f2);
    font-size: 15px;
    line-height: 22px;
}

.tray-title span {
    flex: 1;
}

.pin svg {
    display: block;
    width: 10px;
    height: 12px;
}

.close-tray {
    width: 12px;
    height: 12px;
    background: #c75050;
    color: #fff;
    font: bold 10px/10px "Liberation Sans", sans-serif;
}

.tray-body {
    display: flex;
    flex: 1;
    min-height: 0;
}

.panels {
    display: flex;
    flex-direction: column;
    flex: 1;
    min-width: 0;
}

.panel-title {
    display: flex;
    align-items: center;
    flex: none;
    height: 23px;
    margin: 0;
    padding: 0 3px 0 10px;
    background: linear-gradient(#e6e6e6, #b6b6b6);
    border-top: 1px solid #aaa;
    font-size: 15px;
    font-weight: 400;
    line-height: 20px;
}

.panel-title::before {
    content: "";
    margin-right: 9px;
    border: 4px solid transparent;
    border-top: 8px solid #000;
    border-bottom: none;
}

.panel-title button {
    width: 16px;
    height: 16px;
    margin-left: auto;
    border: 1px solid #999;
    background: #e4e4e4;
    font: 15px/12px "Liberation Sans", sans-serif;
}

.entity {
    height: 181px;
    flex: none;
    padding-left: 2px;
}

.entity-head {
    display: flex;
    align-items: center;
    justify-content: space-between;
    height: 32px;
    padding: 0 8px 0 10px;
    background: linear-gradient(#999, #999) 0 100% / 245px 1px no-repeat;
}

.entity-head strong {
    font-weight: 700;
}

.expand svg {
    display: block;
    width: 12px;
    height: 18px;
}

.entity-form {
    display: flex;
    justify-content: space-between;
    padding: 9px 11px 0 11px;
}

.preview {
    width: 76px;
    height: 86px;
    border: 1px solid #999;
    background: linear-gradient(to top right, #a4b1bb 50%, #fff 50%) 0 5px / 100% 74px no-repeat #f3f3f3;
}

.preview.small {
    width: 54px;
    height: 60px;
    background-size: 100% 52px;
    background-position: 0 3px;
}

.fields {
    display: grid;
    grid-template-columns: 1fr 118px;
    grid-auto-rows: 24px;
    gap: 4px 3px;
    flex: 1;
}

.fields label {
    line-height: 24px;
    text-align: right;
}

.off {
    color: #999;
}

.tray input, .combo {
    position: relative;
    min-width: 0;
    border: 2px solid;
    border-color: #777 #e8e8e8 #e8e8e8 #777;
    background: #fff;
}

.tray input {
    height: 24px;
    padding: 0 2px;
}

.tray input.flat {
    background: #f1f1f1;
}

.combo select {
    display: block;
    width: 100%;
    height: 100%;
    padding: 0 2px;
    border: none;
    background: none;
    appearance: none;
    opacity: 1;
}

.combo::after {
    content: "";
    position: absolute;
    right: 0;
    top: 0;
    bottom: 0;
    width: 20px;
    border: 1px solid;
    border-color: #eee #777 #777 #eee;
    background: #f1f1f1;
    pointer-events: none;
}

.combo::before {
    content: "";
    position: absolute;
    z-index: 1;
    right: 5px;
    top: 8px;
    border: 5px solid transparent;
    border-top-color: #000;
    border-bottom: none;
    pointer-events: none;
}

.combo.off {
    background: #f1f1f1;
}

.combo.off::before {
    right: 6px;
    border-width: 3px;
    border-top-color: #777;
    border-bottom: none;
}

.combo.off::after {
    width: 16px;
}

.material {
    display: flex;
    flex: none;
    height: 94px;
    padding: 2px 2px 0 2px;
    border-bottom: 1px solid #999;
}

.material .name {
    width: 160px;
    height: 23px;
    margin: 0 0 0 4px;
    color: #777;
}

.material-tools {
    display: flex;
    flex-direction: column;
    align-items: center;
    gap: 9px;
    flex: 1;
    padding: 4px 0 0 4px;
}

.material-tools svg {
    display: block;
}

.default-mat {
    width: 26px;
    height: 26px;
    background: linear-gradient(to top right, #a4b1bb 50%, #fff 50%);
}

.tabs {
    display: flex;
    align-items: flex-end;
    flex: none;
    height: 31px;
}

.tab {
    height: 20px;
    width: 47px;
    padding: 0 0 0 5px;
    border-top: 1px solid #fff;
    border-right: 2px solid #777;
    font-size: 11px;
    line-height: 16px;
    text-align: left;
}

.tab.current {
    width: 51px;
    height: 23px;
    padding-left: 8px;
}

.dropper {
    align-self: center;
    margin: 0 5px 0 auto;
}

.dropper svg, .nav svg {
    display: block;
}

.nav {
    display: flex;
    align-items: center;
    flex: none;
    height: 36px;
    gap: 9px;
    padding: 0 7px 3px 8px;
    border-bottom: 1px solid #999;
    font-size: 12px;
}

.nav .next {
    margin: 0 2px;
    transform: scaleX(-1);
}

.nav .dim {
    color: #999;
}

.nav .combo {
    flex: 1;
    height: 26px;
    margin: 4px 0 0 -2px;
}

.nav .combo.line select {
    width: 126px;
    height: 21px;
    margin-left: 3px;
    padding: 0;
    border-bottom: 1px solid #000;
}

.swatches {
    display: grid;
    grid-template-columns: repeat(4, 62px);
    grid-auto-rows: 62px;
    gap: 2px;
    flex: 1;
    min-height: 0;
    padding: 2px 3px;
    background: #fff;
}

.swatch {
    padding: 1px;
    border: 1px solid #999;
}

.swatch span, .swatch svg {
    display: block;
    width: 58px;
    height: 58px;
}

.silver {
    background: linear-gradient(100deg, #c2c2c2, #fff 90%);
}

.ribbed {
    background: linear-gradient(to bottom right, rgba(40, 60, 50, .2) 50%, rgba(255, 255, 255, .15) 50%), repeating-linear-gradient(to right, #7f948a 0 4px, #a9c4b6 5px 6px, #8ba296 7px 10px);
}

.green {
    background: linear-gradient(to bottom right, #3f5f08 50%, #a0b184 50%);
}

.cyan {
    background: linear-gradient(to bottom right, #10c8f4 50%, #87e5fb 50%);
}

.blue {
    background: linear-gradient(to bottom right, #6696ee 50%, #b2caf8 50%);
}

.yellow {
    background: linear-gradient(to bottom right, #fffc1c 50%, #ffff7c 50%);
}

.gray {
    background: linear-gradient(to bottom right, #828282 50%, #c1c1c1 50%);
}

.second {
    flex: none;
    margin-top: 3px;
    padding-top: 3px;
    border-top: 2px solid #777;
}

.second h3 {
    height: 23px;
    margin: 0;
    padding-left: 4px;
    border: 1px solid #999;
    border-width: 1px 0;
    background: #e5e5e5;
    font-size: 11px;
    font-weight: 400;
    line-height: 20px;
}

.folders {
    display: flex;
    gap: 2px;
    height: 33px;
    padding: 2px 0 0 3px;
    background: #fff;
    overflow: hidden;
}

.folders button {
    width: 62px;
    height: 62px;
    border: 1px solid #999;
}

.folders button svg {
    width: 38px;
    height: 34px;
}

.folders .scroll {
    width: 20px;
    margin: -2px 0 0 auto;
}

.scroll {
    display: flex;
    flex-direction: column;
    align-items: center;
    flex: none;
    width: 21px;
    background: #f1f1f1;
}

.scroll svg {
    flex: none;
    width: 10px;
    height: 7px;
    margin: 8px 0 6px;
    fill: none;
    stroke: #555;
    stroke-width: 2px;
}

.scroll i {
    width: 19px;
    height: 21px;
    background: #cdcdcd;
}

.scroll .down {
    margin-top: auto;
}

/* status bar */

.status {
    display: flex;
    align-items: center;
    gap: 17px;
    flex: none;
    height: 27px;
    padding: 3px 6px 0;
    background: #f1f1f1;
    line-height: 24px;
}

.status svg {
    width: 18px;
    height: 18px;
    flex: none;
}

.hint {
    flex: 1;
    margin-left: -4px;
    padding-left: 12px;
    background: linear-gradient(#999, #999) 0 50% / 1px 14px no-repeat, linear-gradient(#777, #777) 100% 50% / 1px 14px no-repeat;
    font-size: 17px;
}

.status label {
    margin-left: -8px;
}

.status input {
    width: 250px;
    height: 22px;
    margin: 2px 0 0 -8px;
    border: 1px solid #a9b9cc;
    border-bottom: none;
    background: #f1f1f1;
}
```
